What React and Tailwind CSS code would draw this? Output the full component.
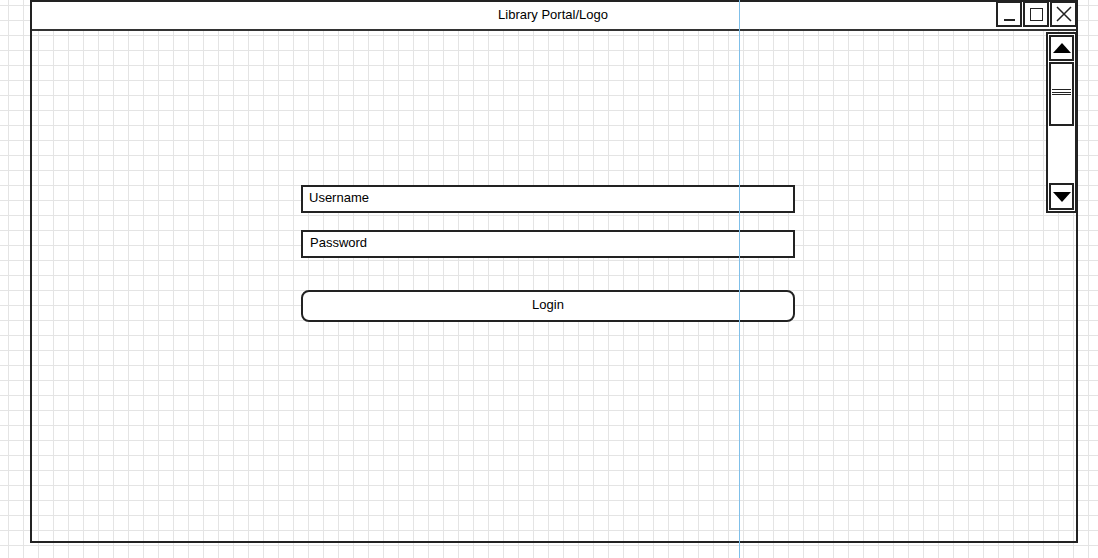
export default function App() {
    return (
        <div className="relative h-[558px] w-[1098px] overflow-hidden bg-white bg-[linear-gradient(to_right,#e4e4e4_1px,transparent_1px),linear-gradient(to_bottom,#e4e4e4_1px,transparent_1px)] bg-[size:15px_15px] bg-[position:8px_5px] font-['Liberation_Sans',Arial,sans-serif] text-[13px] text-black">
            {/* Window */}
            <div className="ml-[30px] flex h-[543px] w-[1048px] flex-col border-2 border-[#222]">

                {/* Title bar */}
                <div className="grid h-[29px] shrink-0 grid-cols-[1fr_auto_1fr] border-b-2 border-[#333] bg-white">
                    <div />
                    <div className="self-center pb-[3px] pr-[2px] leading-none">Library Portal/Logo</div>
                    <div className="-mr-[1px] -mt-[1px] flex gap-[1px] self-start justify-self-end">
                        <div className="flex h-[26px] w-[26px] items-end justify-center border-2 border-[#222] bg-white pb-[4px]">
                            <div className="h-[2px] w-[11px] bg-[#222]" />
                        </div>
                        <div className="flex h-[26px] w-[26px] items-center justify-center border-2 border-[#222] bg-white">
                            <div className="h-[13px] w-[13px] border-[1.5px] border-[#222]" />
                        </div>
                        <div className="flex h-[26px] w-[27px] items-center justify-center border-2 border-[#222] bg-white">
                            <svg width="16" height="16" viewBox="0 0 16 16" fill="none" stroke="#222" strokeWidth="1.5">
                                <path d="M1 1l14 14M15 1L1 15" />
                            </svg>
                        </div>
                    </div>
                </div>

                {/* Body */}
                <div className="flex flex-1">
                    <div className="flex flex-1 flex-col pl-[269px] pt-[154px]">
                        <div className="flex h-[28px] w-[494px] items-center border-2 border-[#222] bg-white px-[6px] pb-[3px]">
                            Username
                        </div>
                        <div className="mt-[17px] flex h-[28px] w-[494px] items-center border-2 border-[#222] bg-white px-[7px] pb-[3px]">
                            Password
                        </div>
                        <div className="mt-[32px] flex h-[32px] w-[494px] items-center justify-center rounded-[8px] border-2 border-[#222] bg-white pb-[2px]">
                            Login
                        </div>
                    </div>

                    {/* Scrollbar */}
                    <div className="-mr-[1px] mt-[1px] flex h-[181px] w-[31px] flex-col border-2 border-[#222] bg-white p-[1px]">
                        <div className="flex h-[26px] shrink-0 items-center justify-center border-2 border-[#222] bg-white">
                            <svg width="18" height="10" viewBox="0 0 18 10">
                                <path d="M9 0L18 10H0z" fill="#000" />
                            </svg>
                        </div>
                        <div className="mt-[1px] flex h-[64px] shrink-0 flex-col items-center pt-[25px] gap-[1.5px] border-2 border-[#222] bg-white">
                            <div className="h-px w-[19px] shrink-0 bg-[#222]" />
                            <div className="h-px w-[19px] shrink-0 bg-[#222]" />
                            <div className="h-px w-[19px] shrink-0 bg-[#222]" />
                        </div>
                        <div className="flex-1" />
                        <div className="flex h-[27px] shrink-0 items-center justify-center border-2 border-[#222] bg-white">
                            <svg width="18" height="10" viewBox="0 0 18 10">
                                <path d="M0 0H18L9 10z" fill="#000" />
                            </svg>
                        </div>
                    </div>
                </div>
            </div>

            {/* Guide line */}
            <div className="absolute left-[739px] top-0 h-full w-px bg-[#7fbfe9]" />
        </div>
    );
}
